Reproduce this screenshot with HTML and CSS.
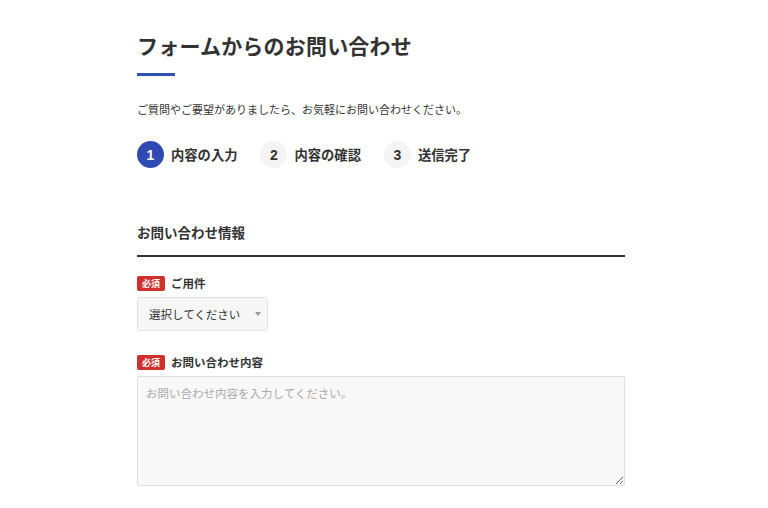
FILE: index.html
```html
<!DOCTYPE html>
<html lang="ja">
<head>
    <meta charset="UTF-8">
    <meta name="viewport" content="width=device-width, initial-scale=1.0">
    <title>フォームからのお問い合わせ</title>
    <link rel="stylesheet" href="styles.css">
</head>
<body>
    <div class="container">
        <h1 class="page-title">フォームからのお問い合わせ</h1>
        <div class="title-bar"></div>
        <p class="lead">ご質問やご要望がありましたら、お気軽にお問い合わせください。</p>

        <ol class="steps">
            <li class="step active"><span class="step-num">1</span><span class="step-label">内容の入力</span></li>
            <li class="step"><span class="step-num">2</span><span class="step-label">内容の確認</span></li>
            <li class="step"><span class="step-num">3</span><span class="step-label">送信完了</span></li>
        </ol>

        <h2 class="section-title">お問い合わせ情報</h2>

        <form class="contact-form">
            <div class="field">
                <label class="field-label"><span class="required">必須</span>ご用件</label>
                <div class="select-wrap">
                    <select class="select">
                        <option>選択してください</option>
                    </select>
                </div>
            </div>
            <div class="field">
                <label class="field-label"><span class="required">必須</span>お問い合わせ内容</label>
                <textarea class="textarea" placeholder="お問い合わせ内容を入力してください。"></textarea>
            </div>
        </form>
    </div>
</body>
</html>
```

FILE: styles.css
```css
body {
    margin: 0;
    background: #fff;
    color: #333;
    font-family: "Noto Sans CJK JP", "Noto Sans", sans-serif;
}
.container {
    width: 488px;
    margin-left: 137px;
    padding-top: 29px;
}
.page-title {
    margin: 0;
    font-size: 21px;
    line-height: 32px;
    font-weight: 700;
    color: #333;
    letter-spacing: 0.2px;
}
.title-bar {
    width: 38px;
    height: 3px;
    background: #3050b8;
    margin-top: 12px;
}
.lead {
    margin: 24px 0 0;
    font-size: 11px;
    line-height: 18px;
    color: #333;
}
.steps {
    list-style: none;
    margin: 23px 0 0;
    padding: 0;
    display: flex;
    gap: 23px;
}
.step {
    display: flex;
    align-items: center;
    gap: 7px;
}
.step-num {
    width: 27px;
    height: 27px;
    border-radius: 50%;
    background: #f4f4f4;
    color: #333;
    display: flex;
    align-items: center;
    justify-content: center;
    font-family: "Liberation Sans", Arial, sans-serif;
    font-weight: 700;
    font-size: 14px;
}
.step.active .step-num {
    background: #2f4bb3;
    color: #fff;
}
.step-label {
    font-size: 13.3px;
    font-weight: 700;
    color: #333;
}
.section-title {
    margin: 54px 0 0;
    padding-bottom: 13px;
    font-size: 13.5px;
    line-height: 20px;
    font-weight: 700;
    border-bottom: 2px solid #333;
}
.contact-form {
    margin-top: 18px;
}
.field {
    margin-bottom: 23px;
}
.field-label {
    display: flex;
    align-items: center;
    gap: 6px;
    font-size: 11.5px;
    font-weight: 700;
    color: #333;
    margin-bottom: 6px;
}
.required {
    display: inline-block;
    width: 28px;
    height: 15px;
    line-height: 15px;
    background: #d0302e;
    color: #fff;
    font-size: 9px;
    font-weight: 700;
    text-align: center;
    border-radius: 2px;
}
.select-wrap {
    position: relative;
    width: 131px;
}
.select-wrap::after {
    content: "";
    position: absolute;
    right: 7px;
    top: 15px;
    border-left: 3px solid transparent;
    border-right: 3px solid transparent;
    border-top: 4px solid #999;
}
.select {
    appearance: none;
    width: 131px;
    height: 34px;
    padding: 0 11px;
    background: #f7f7f7;
    border: 1px solid #e3e3e3;
    border-radius: 3px;
    font-family: inherit;
    font-size: 11.5px;
    color: #333;
}
.textarea {
    display: block;
    box-sizing: border-box;
    width: 488px;
    height: 110px;
    padding: 8px 8px;
    background: #f8f8f8;
    border: 1px solid #dedede;
    border-radius: 2px;
    font-family: inherit;
    font-size: 11.5px;
    color: #333;
}
.textarea::placeholder {
    color: #aaa;
}
```
